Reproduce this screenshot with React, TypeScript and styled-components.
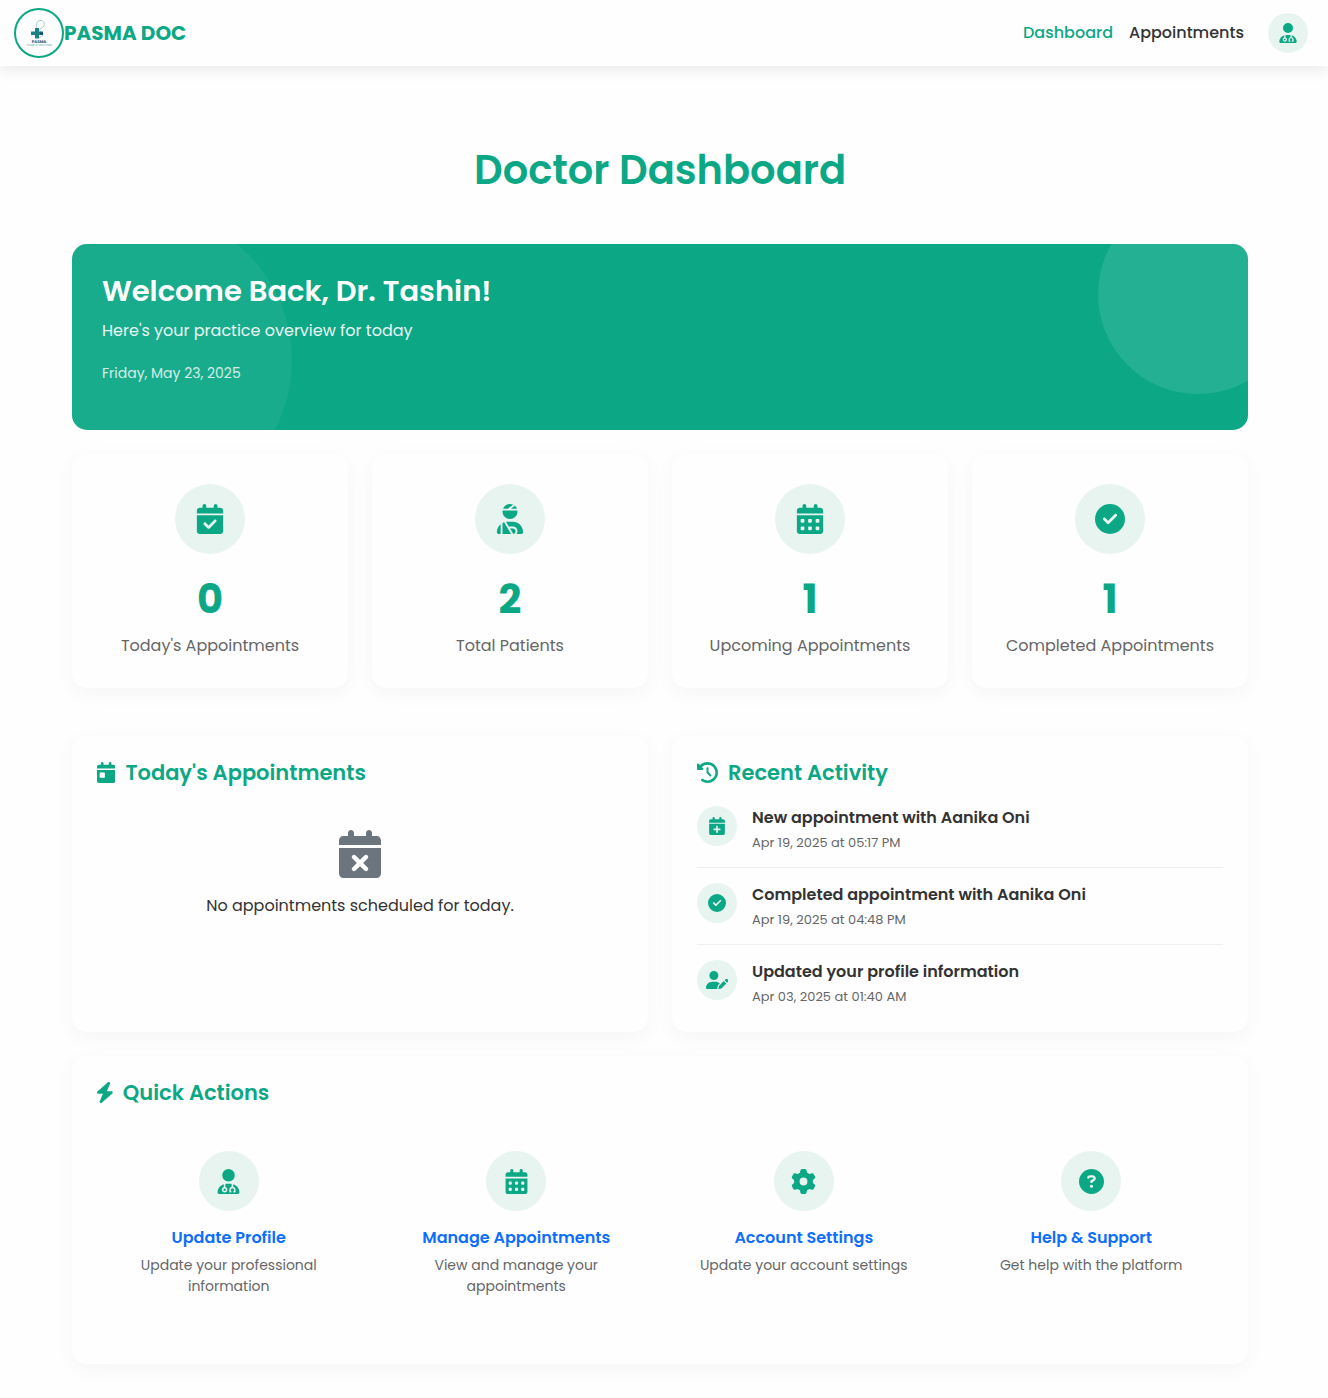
import React from "react";
import styled, { createGlobalStyle } from "styled-components";
import type { IconType } from "react-icons";
import {
  FaBolt,
  FaCalendarCheck,
  FaCalendarDay,
  FaCalendarDays,
  FaCalendarPlus,
  FaCalendarXmark,
  FaCircleCheck,
  FaCircleQuestion,
  FaClockRotateLeft,
  FaGear,
  FaUserDoctor,
  FaUserInjured,
  FaUserPen,
} from "react-icons/fa6";

const color = {
  primary: "#0ca886",
  tint: "#e8f4f0",
  text: "#333333",
  muted: "#666666",
  link: "#0d6efd",
  gray: "#6c757d",
  line: "#eeeeee",
  surface: "#fefefe",
};

const GlobalStyle = createGlobalStyle`
  *, *::before, *::after { box-sizing: border-box; }
  body {
    margin: 0;
    background: ${color.surface};
    color: ${color.text};
    font-family: Poppins, Inter, "Noto Sans", sans-serif;
    font-size: 16px;
    line-height: 24px;
  }
  h1, h2, h3, p, ul { margin: 0; padding: 0; }
  ul { list-style: none; }
  a { text-decoration: none; }
  svg { display: block; }
`;

const Header = styled.header`
  display: flex;
  align-items: center;
  justify-content: space-between;
  padding: 8px 20px 8px 14px;
  background: ${color.surface};
  box-shadow: 0 2px 15px rgba(0, 0, 0, 0.1);
`;

const Brand = styled.a`
  display: flex;
  align-items: center;
  color: ${color.primary};
  font-size: 20px;
  font-weight: 700;
`;

const LogoRing = styled.span`
  display: flex;
  align-items: center;
  justify-content: center;
  width: 50px;
  height: 50px;
  border: 2px solid ${color.primary};
  border-radius: 50%;
`;

const Nav = styled.nav`
  display: flex;
  align-items: center;
  gap: 16px;
`;

const NavLink = styled.a<{ $active?: boolean }>`
  color: ${(p) => (p.$active ? color.primary : color.text)};
  font-size: 16px;
  font-weight: 500;
`;

const IconCircle = styled.span<{ $size: number; $icon: number; $ratio?: string }>`
  display: flex;
  flex: none;
  align-items: center;
  justify-content: center;
  width: ${(p) => p.$size}px;
  height: ${(p) => p.$size}px;
  border-radius: 50%;
  background: ${color.tint};
  color: ${color.primary};
  font-size: ${(p) => p.$icon}px;

  svg {
    width: auto;
    height: 1em;
    aspect-ratio: ${(p) => p.$ratio ?? "1 / 1"};
  }
`;

const AvatarButton = styled.button`
  margin: 0 0 0 8px;
  padding: 0;
  border: 0;
  border-radius: 50%;
  background: none;
  cursor: pointer;
`;

const Main = styled.main`
  padding: 80px 20px 32px 12px;
`;

const Container = styled.div`
  display: flex;
  flex-direction: column;
  gap: 24px;
  max-width: 1176px;
  margin: 0 auto;
`;

const PageTitle = styled.h1`
  margin-bottom: 26px;
  color: ${color.primary};
  font-size: 40px;
  font-weight: 600;
  line-height: 48px;
  text-align: center;
`;

const Banner = styled.section`
  position: relative;
  overflow: hidden;
  padding: 30px 30px 46px;
  border-radius: 15px;
  background: ${color.primary};
  color: #ffffff;

  &::before,
  &::after {
    content: "";
    position: absolute;
    border-radius: 50%;
  }
  &::before {
    top: -50px;
    right: -50px;
    width: 200px;
    height: 200px;
    background: rgba(255, 255, 255, 0.1);
  }
  &::after {
    bottom: -80px;
    left: -80px;
    width: 300px;
    height: 300px;
    background: rgba(255, 255, 255, 0.05);
  }
`;

const BannerTitle = styled.h2`
  margin-bottom: 10px;
  font-size: 29px;
  font-weight: 600;
  line-height: 35px;
`;

const BannerText = styled.p`
  margin-bottom: 20px;
  font-size: 16px;
  opacity: 0.9;
`;

const BannerDate = styled.p`
  font-size: 14px;
  line-height: 21px;
  opacity: 0.8;
`;

const Card = styled.section`
  padding: 25px;
  border-radius: 15px;
  background: ${color.surface};
  box-shadow: 0 5px 20px rgba(0, 0, 0, 0.04);
`;

const StatGrid = styled.div`
  display: grid;
  grid-template-columns: repeat(auto-fit, minmax(240px, 1fr));
  gap: 24px;
  margin-bottom: 24px;
`;

const StatCard = styled(Card)`
  display: flex;
  flex-direction: column;
  align-items: center;
  padding: 30px 20px;
`;

const StatValue = styled.p`
  margin: 20px 0 10px;
  color: ${color.primary};
  font-size: 40px;
  font-weight: 700;
  line-height: 50px;
`;

const StatLabel = styled.p`
  color: ${color.muted};
  font-size: 16px;
`;

const PanelGrid = styled.div`
  display: grid;
  grid-template-columns: repeat(auto-fit, minmax(420px, 1fr));
  gap: 24px;
`;

const SectionTitle = styled.h2<{ $ratio?: string }>`
  display: flex;
  align-items: center;
  gap: 10px;
  margin-bottom: 22px;
  color: ${color.primary};
  font-size: 21px;
  font-weight: 600;
  line-height: 23px;

  svg {
    width: auto;
    height: 1em;
    aspect-ratio: ${(p) => p.$ratio ?? "1 / 1"};
  }
`;

const EmptyState = styled.div`
  display: flex;
  flex-direction: column;
  align-items: center;
  gap: 16px;
  padding: 24px;

  svg {
    color: ${color.gray};
    font-size: 48px;
  }
`;

const ActivityItem = styled.li`
  display: flex;
  gap: 15px;
  padding: 15px 0;
  border-bottom: 1px solid ${color.line};

  &:first-child {
    padding-top: 0;
  }
  &:last-child {
    padding-bottom: 0;
    border-color: transparent;
  }
`;

const ActivityTitle = styled.h3`
  margin-bottom: 4px;
  font-size: 16px;
  font-weight: 600;
  line-height: 24px;
`;

const ActivityTime = styled.p`
  color: ${color.muted};
  font-size: 13px;
  line-height: 18px;
`;

const ActionGrid = styled.div`
  display: grid;
  grid-template-columns: repeat(auto-fit, minmax(240px, 1fr));
  gap: 24px;
`;

const ActionLink = styled.a`
  display: flex;
  flex-direction: column;
  align-items: center;
  padding: 25px 25px 42px;
  text-align: center;
`;

const ActionTitle = styled.h3`
  margin: 15px 0 5px;
  color: ${color.link};
  font-size: 16px;
  font-weight: 600;
  line-height: 24px;
`;

const ActionText = styled.p`
  color: ${color.muted};
  font-size: 14px;
  line-height: 21px;
`;

const stats: { icon: IconType; value: number; label: string }[] = [
  { icon: FaCalendarCheck, value: 0, label: "Today's Appointments" },
  { icon: FaUserInjured, value: 2, label: "Total Patients" },
  { icon: FaCalendarDays, value: 1, label: "Upcoming Appointments" },
  { icon: FaCircleCheck, value: 1, label: "Completed Appointments" },
];

const activities: { icon: IconType; ratio?: string; title: string; time: string }[] = [
  { icon: FaCalendarPlus, title: "New appointment with Aanika Oni", time: "Apr 19, 2025 at 05:17 PM" },
  { icon: FaCircleCheck, title: "Completed appointment with Aanika Oni", time: "Apr 19, 2025 at 04:48 PM" },
  { icon: FaUserPen, ratio: "5 / 4", title: "Updated your profile information", time: "Apr 03, 2025 at 01:40 AM" },
];

const actions: { icon: IconType; title: string; text: string }[] = [
  { icon: FaUserDoctor, title: "Update Profile", text: "Update your professional information" },
  { icon: FaCalendarDays, title: "Manage Appointments", text: "View and manage your appointments" },
  { icon: FaGear, title: "Account Settings", text: "Update your account settings" },
  { icon: FaCircleQuestion, title: "Help & Support", text: "Get help with the platform" },
];

function Logo() {
  return (
    <svg width="46" height="46" viewBox="0 0 46 46" aria-hidden="true">
      <path
        d="M21 19c-1-3-1-8 3-8.500c4-.500 5 3 4 5.500c-1 2-4 2-4.500 4c0 2 3 2 3.500 4c0 2-2 3-4 4"
        fill="none"
        stroke="#8cc3c4"
        strokeWidth="0.800"
      />
      <path d="M19 18h4v3.500h4v3.500h-4v3.500h-4V25h-4v-3.500h4z" fill="#1b8288" />
      <circle cx="25.500" cy="23.500" r="1.500" fill="#174a63" />
      <text x="23" y="32.500" textAnchor="middle" fontSize="4" fontWeight="700" fill="#1d5c70" textRendering="geometricPrecision">
        PASMA
      </text>
      <text x="23" y="36" textAnchor="middle" fontSize="3" fontWeight="500" fill="#6bb5b2" textRendering="geometricPrecision">
        YOUR AI DOCTOR
      </text>
    </svg>
  );
}

export default function App() {
  return (
    <>
      <GlobalStyle />
      <Header>
        <Brand href="#">
          <LogoRing>
            <Logo />
          </LogoRing>
          PASMA DOC
        </Brand>
        <Nav>
          <NavLink href="#dashboard" $active>
            Dashboard
          </NavLink>
          <NavLink href="#appointments">Appointments</NavLink>
          <AvatarButton type="button" aria-label="Account">
            <IconCircle $size={40} $icon={20}>
              <FaUserDoctor />
            </IconCircle>
          </AvatarButton>
        </Nav>
      </Header>
      <Main>
        <Container>
          <PageTitle>Doctor Dashboard</PageTitle>
          <Banner>
            <BannerTitle>Welcome Back, Dr. Tashin!</BannerTitle>
            <BannerText>Here's your practice overview for today</BannerText>
            <BannerDate>Friday, May 23, 2025</BannerDate>
          </Banner>
          <StatGrid>
            {stats.map(({ icon: Icon, value, label }) => (
              <StatCard key={label}>
                <IconCircle $size={70} $icon={30}>
                  <Icon />
                </IconCircle>
                <StatValue>{value}</StatValue>
                <StatLabel>{label}</StatLabel>
              </StatCard>
            ))}
          </StatGrid>
          <PanelGrid>
            <Card>
              <SectionTitle $ratio="7 / 8">
                <FaCalendarDay />
                Today's Appointments
              </SectionTitle>
              <EmptyState>
                <FaCalendarXmark />
                <p>No appointments scheduled for today.</p>
              </EmptyState>
            </Card>
            <Card>
              <SectionTitle>
                <FaClockRotateLeft />
                Recent Activity
              </SectionTitle>
              <ul>
                {activities.map(({ icon: Icon, ratio, title, time }) => (
                  <ActivityItem key={title}>
                    <IconCircle $size={40} $icon={18} $ratio={ratio}>
                      <Icon />
                    </IconCircle>
                    <div>
                      <ActivityTitle>{title}</ActivityTitle>
                      <ActivityTime>{time}</ActivityTime>
                    </div>
                  </ActivityItem>
                ))}
              </ul>
            </Card>
          </PanelGrid>
          <Card>
            <SectionTitle $ratio="3 / 4">
              <FaBolt viewBox="32 0 384 512" />
              Quick Actions
            </SectionTitle>
            <ActionGrid>
              {actions.map(({ icon: Icon, title, text }) => (
                <ActionLink key={title} href="#">
                  <IconCircle $size={60} $icon={25}>
                    <Icon />
                  </IconCircle>
                  <ActionTitle>{title}</ActionTitle>
                  <ActionText>{text}</ActionText>
                </ActionLink>
              ))}
            </ActionGrid>
          </Card>
        </Container>
      </Main>
    </>
  );
}
